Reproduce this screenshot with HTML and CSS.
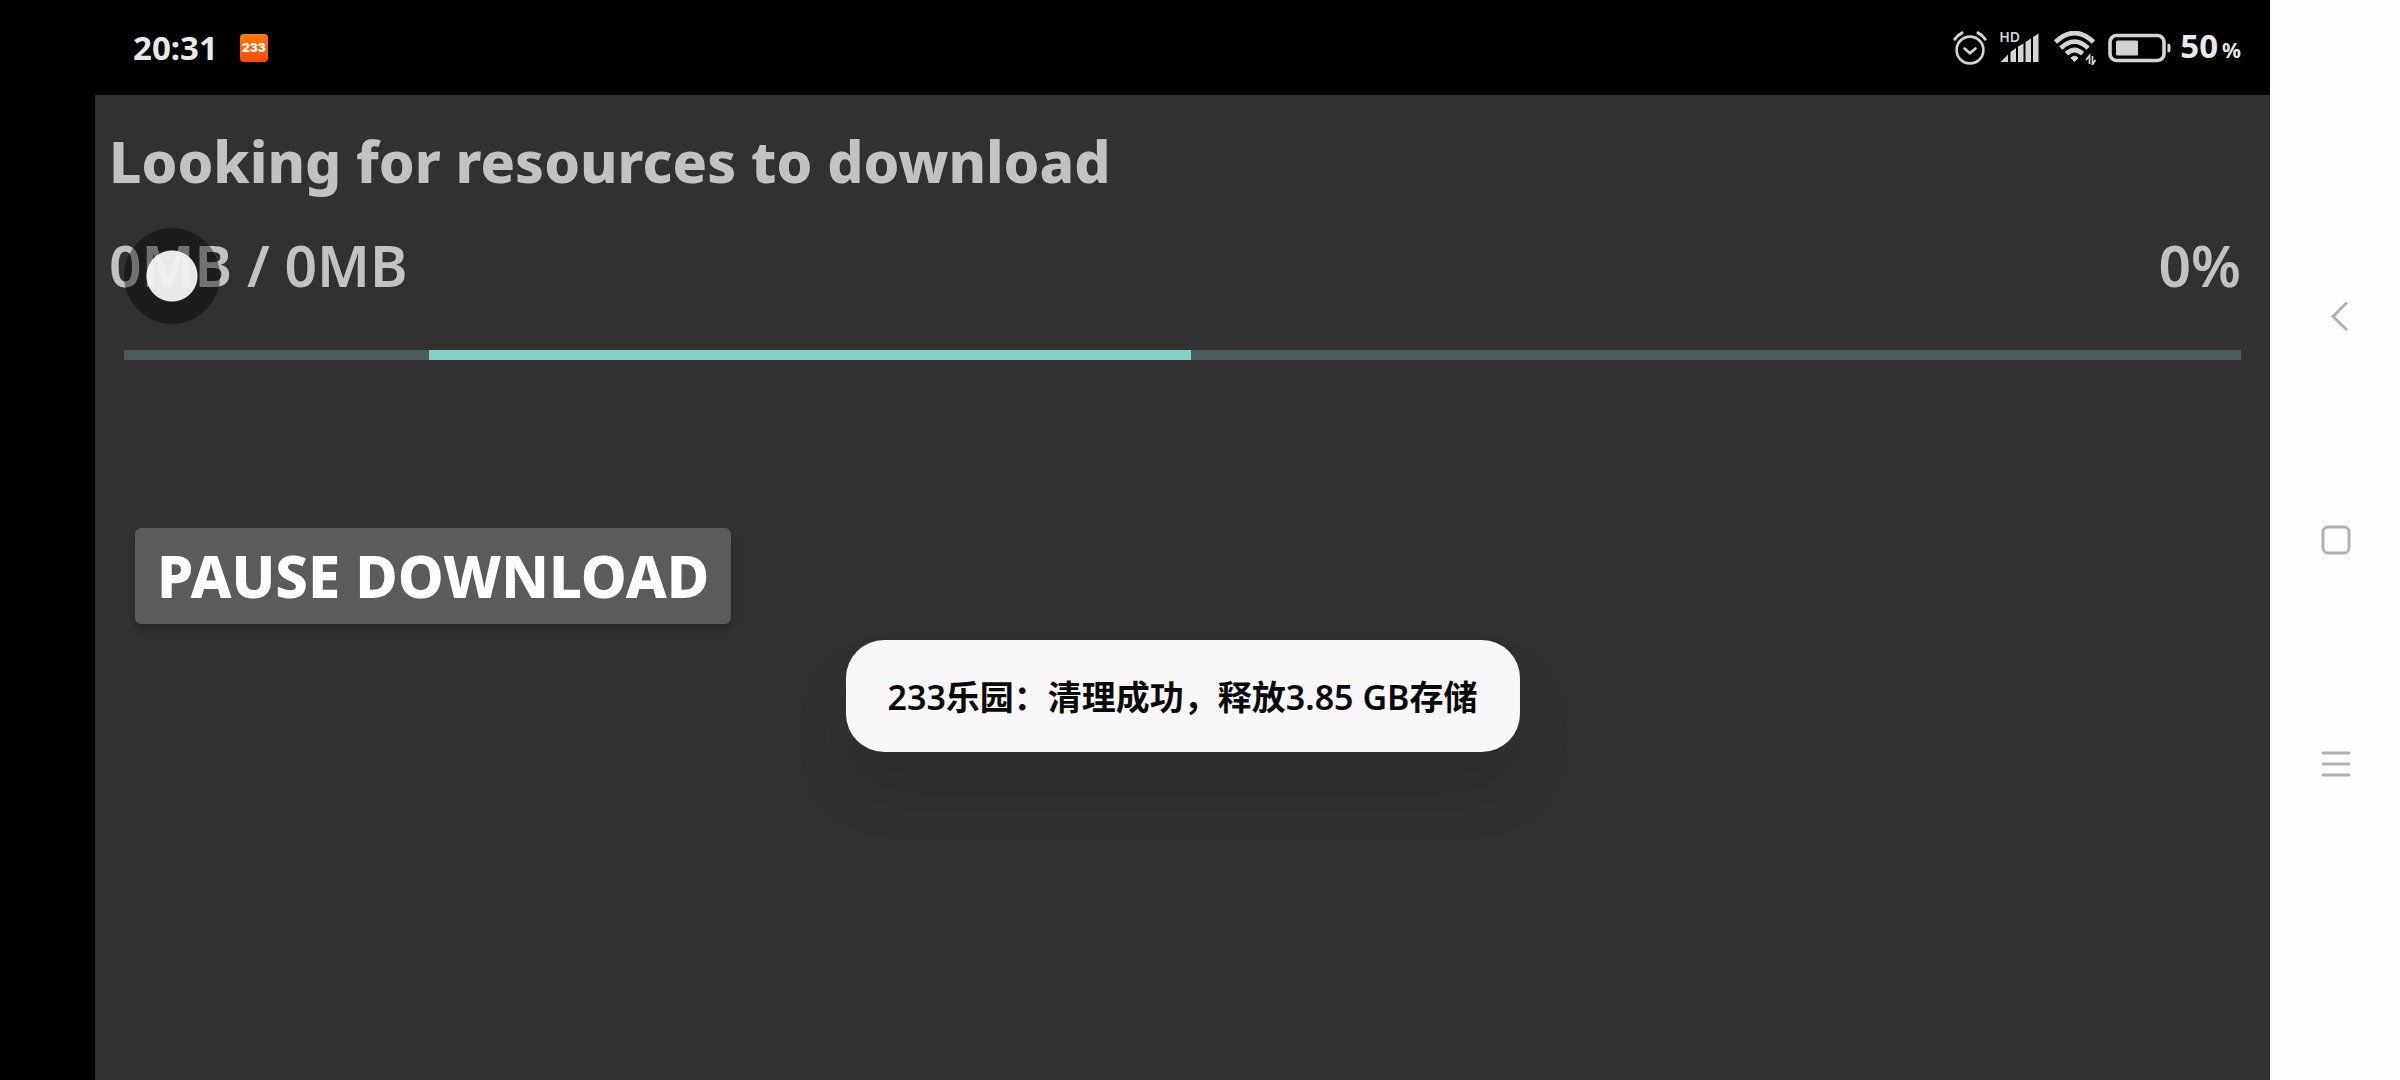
FILE: index.html
```html
<!DOCTYPE html>
<html lang="en">
<head>
<meta charset="utf-8">
<meta name="viewport" content="width=device-width, initial-scale=1">
<title>Download resources</title>
<link rel="stylesheet" href="styles.css">
</head>
<body>
<div class="device">
  <div class="screen">
    <header class="status-bar">
      <div class="status-left">
        <time class="clock">20:31</time>
        <span class="app-badge">233</span>
      </div>
      <div class="status-right">
        <svg class="icon-alarm" width="34" height="34" viewBox="0 0 34 34" fill="none" stroke="currentColor" stroke-width="2.6" stroke-linecap="round" stroke-linejoin="round" aria-hidden="true">
          <circle cx="17" cy="19" r="13.4"/>
          <path d="M11.5 17.5l5.5 4.8 5.5-4.8"/>
          <path d="M1.8 8.2Q4.5 4 9 1.8M32.200 8.200Q29.500 4 25 1.800" stroke-width="3"/>
        </svg>
        <div class="signal">
          <span class="signal-label">HD</span>
          <svg width="40" height="30" viewBox="0 0 40 30" fill="currentColor" aria-hidden="true">
            <path d="M0.500 29L8 21.500V29zM10.500 19l5.500-4V29h-5.500zM18 13.500l5.500-3V29H18zM25.500 9l5.500-3.500V29h-5.500zM33 4L38.500 0.500V29H33z"/>
          </svg>
        </div>
        <svg class="icon-wifi" width="42" height="34" viewBox="0 0 42 34" fill="none" stroke="currentColor" aria-hidden="true">
          <path d="M1.500 11Q20.500 -7 39.500 11" stroke-width="4.600"/>
          <path d="M6.800 17.200Q20.500 4.200 34.200 17.200" stroke-width="4.600"/>
          <path d="M12.400 22.800Q20.500 15.200 28.600 22.800" stroke-width="4.600"/>
          <path d="M20.500 30.500l-3.600-3.500q3.600-3.600 7.200 0z" fill="currentColor"/>
          <path d="M35.500 33v-8.500l-3.500 4.500M38.500 25v8.500l3-4.500" stroke-width="1.800"/>
        </svg>
        <svg class="icon-battery" width="64" height="30" viewBox="0 0 64 30" aria-hidden="true">
          <rect x="2" y="2.500" width="54" height="25" rx="6.500" fill="none" stroke="currentColor" stroke-width="3.600"/>
          <rect x="8" y="7.500" width="22" height="15" rx="1.500" fill="currentColor"/>
          <path d="M59.500 10.500q3 0 3 2.500v4q0 2.500-3 2.500z" fill="currentColor"/>
        </svg>
        <span class="battery-level">50<small class="battery-unit">%</small></span>
      </div>
    </header>

    <main class="content">
      <h1 class="title">Looking for resources to download</h1>
      <div class="amounts">
        <span>0MB / 0MB</span>
        <span>0%</span>
      </div>
      <div class="progress" role="progressbar" aria-label="Download progress">
        <div class="progress-segment"></div>
      </div>
      <button class="pause" type="button">PAUSE DOWNLOAD</button>
      <div class="touch-pointer" aria-hidden="true"></div>
    </main>

    <div class="toast" role="status" lang="zh-CN">233乐园：清理成功，释放3.85 GB存储</div>
  </div>

  <nav class="nav-bar" aria-label="System navigation">
    <button class="nav-button" type="button" aria-label="Back">
      <svg width="32" height="32" viewBox="0 0 32 32"><path d="M27 2.500L13 16.500l14 13.500"/></svg>
    </button>
    <button class="nav-button" type="button" aria-label="Home">
      <svg width="32" height="32" viewBox="0 0 32 32"><rect x="3" y="3" width="26" height="26" rx="5"/></svg>
    </button>
    <button class="nav-button" type="button" aria-label="Recent apps">
      <svg width="32" height="32" viewBox="0 0 32 32"><path d="M2 5h28M2 16h28M2 27h28"/></svg>
    </button>
  </nav>
</div>
</body>
</html>
```
FILE: styles.css
```css
* {
  box-sizing: border-box;
}

body {
  margin: 0;
  background: #000;
  font-family: "Noto Sans", "Noto Sans CJK SC", sans-serif;
}

button {
  border: 0;
  font: inherit;
  cursor: pointer;
}

svg {
  display: block;
}

.device {
  display: grid;
  grid-template-columns: 1fr 130px;
  min-height: 100vh;
  padding-left: 95px;
}

.screen {
  position: relative;
  display: flex;
  flex-direction: column;
}

/* Status bar */
.status-bar {
  display: flex;
  justify-content: space-between;
  align-items: center;
  height: 95px;
  padding: 0 29px 0 38px;
  color: #d4d4d4;
}

.status-left,
.status-right {
  display: flex;
  align-items: center;
}

.status-left {
  gap: 22px;
}

.clock,
.battery-level {
  color: #e9e9e9;
  font-size: 33px;
  font-weight: 700;
  line-height: 40px;
}

.app-badge {
  width: 28px;
  border-radius: 4px;
  background: linear-gradient(#ff7a0c, #ff4a00);
  color: #fff;
  font-family: Inter, sans-serif;
  font-size: 12px;
  font-weight: 900;
  line-height: 28px;
  text-align: center;
}

.signal {
  position: relative;
  margin: 0 14px 0 13px;
}

.signal-label {
  position: absolute;
  top: -3px;
  left: -1px;
  font-size: 14px;
  font-weight: 600;
  line-height: 14px;
}

.icon-battery {
  margin: 0 8px 0 12px;
}

.battery-unit {
  margin-left: 4px;
  font-size: 21px;
}

/* Download panel */
.content {
  position: relative;
  flex: 1;
  padding: 26px 29px 28px 14px;
  background: #323032;
  color: #c4c1c3;
  font-size: 57px;
  line-height: 80px;
}

.title {
  margin: 0 0 24px;
  font-size: inherit;
  font-weight: 800;
}

.amounts {
  display: flex;
  justify-content: space-between;
  font-weight: 600;
}

.progress {
  height: 10px;
  margin: 45px 0 168px 15px;
  background: #4b5d5b;
}

.progress-segment {
  width: 36%;
  height: 100%;
  margin-left: 14.4%;
  background: #87cfc1;
}

.pause {
  display: block;
  margin-left: 26px;
  padding: 8px 22px;
  border-radius: 6px;
  background: #5c5a5c;
  box-shadow: 0 5px 6px rgba(0, 0, 0, 0.2);
  color: #fff;
  font-size: 58px;
  font-weight: 800;
}

.touch-pointer {
  position: absolute;
  top: 133px;
  left: 29px;
  width: 96px;
  height: 96px;
  border-radius: 50%;
  background: radial-gradient(circle, rgba(240, 240, 240, 0.96) 25px, rgba(0, 0, 0, 0.42) 26px);
}

/* Toast over the panel */
.toast {
  position: absolute;
  bottom: 328px;
  left: 50%;
  transform: translateX(-50%);
  padding: 33px 42px 31px;
  border-radius: 38px;
  background: #f9f7fa;
  box-shadow: 0 40px 60px rgba(0, 0, 0, 0.09);
  color: #0a0a0a;
  font-size: 34px;
  font-weight: 600;
  line-height: 48px;
  white-space: nowrap;
}

/* System navigation */
.nav-bar {
  display: flex;
  flex-direction: column;
  align-items: center;
  justify-content: center;
  gap: 160px;
  padding-left: 2px;
  background: #fefefe;
}

.nav-button {
  padding: 16px;
  background: none;
}

.nav-button svg {
  fill: none;
  stroke: #b0b0b0;
  stroke-width: 3;
}
```
